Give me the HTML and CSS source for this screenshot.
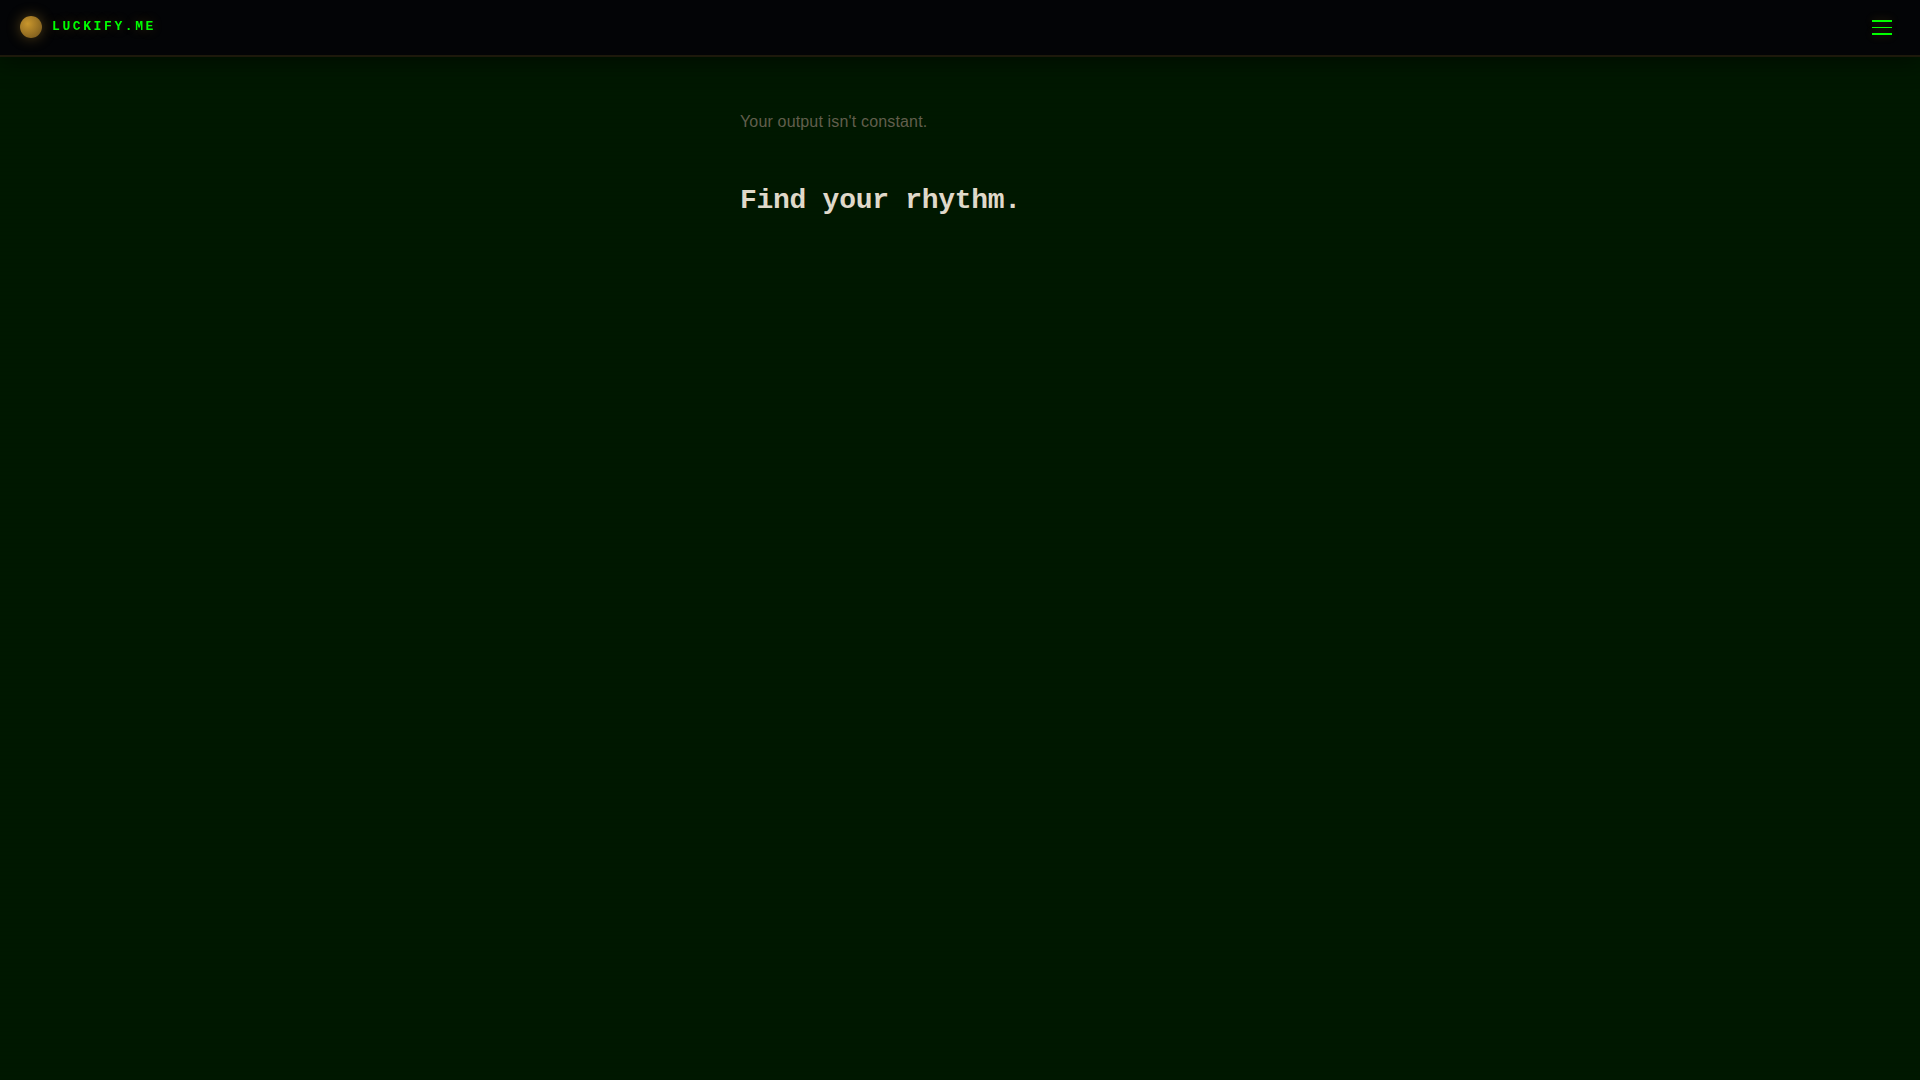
FILE: index.html
```html
<!DOCTYPE html>
<html lang="en">
<head>
    <meta charset="UTF-8">
    <meta name="viewport" content="width=device-width, initial-scale=1.0">
    <title>Luckify.me</title>
    <link rel="stylesheet" href="styles.css">
</head>
<body>
<header class="topbar">
    <a class="brand" href="/">
        <span class="brand-orb"></span>
        <span class="brand-name">LUCKIFY.ME</span>
    </a>
    <button class="menu-btn" type="button" aria-label="Open menu">
        <span class="line"></span>
        <span class="line thin"></span>
        <span class="line"></span>
    </button>
</header>

<main class="intro">
    <p class="lead">Your output isn't constant.</p>
    <h1 class="title">Find your rhythm.</h1>
</main>
</body>
</html>
```

FILE: styles.css
```css
:root {
    --bg: #001800;
    --bar: #030406;
    --green: #00ff00;
    --gold: #c9962c;
    --text: #e0dacb;
    --muted: #625f4d;
}

* {
    box-sizing: border-box;
}

body {
    margin: 0;
    min-height: 100vh;
    background: var(--bg);
    color: var(--text);
    font-family: "Liberation Sans", Arial, sans-serif;
}

/* scanlines over the page, too faint to show on the dark background */
body::after {
    content: "";
    position: fixed;
    inset: 0;
    pointer-events: none;
    background: repeating-linear-gradient(to bottom, transparent 0 3px, rgba(0, 0, 0, 0.02) 3px 4px);
}

/* Header */
.topbar {
    position: relative;
    z-index: 1;
    display: flex;
    align-items: center;
    justify-content: space-between;
    height: 57px;
    padding: 0 20px;
    background: var(--bar);
    border-bottom: 2px solid #1d190b;
    box-shadow: 0 4px 24px rgba(0, 0, 0, 0.5);
}

.brand {
    display: flex;
    align-items: center;
    gap: 10px;
    height: 23px;
    padding-bottom: 1px;
    text-decoration: none;
}

.brand-orb {
    width: 22px;
    height: 22px;
    border-radius: 50%;
    background: radial-gradient(circle at 35% 35%, var(--gold), #6e511b);
    box-shadow: 0 0 14px rgba(201, 150, 44, 0.4);
}

.brand-name {
    color: var(--green);
    font: bold 13px/20px "Liberation Mono", monospace;
    letter-spacing: 0.2em;
    text-shadow: 0 0 12px rgba(201, 150, 44, 0.3);
}

.menu-btn {
    display: flex;
    flex-direction: column;
    gap: 5px;
    padding: 8px;
    border: 0;
    background: none;
    cursor: pointer;
}

.menu-btn .line {
    width: 20px;
    height: 2px;
    background: var(--green);
    box-shadow: 0 0 8px rgba(201, 150, 44, 0.3);
}

.menu-btn .line.thin {
    height: 1px;
}

/* Intro */
.intro {
    max-width: 480px;
    margin: 0 auto;
    padding: 52px 20px;
}

.lead {
    margin: 0 0 48px;
    color: var(--muted);
    font-size: 16px;
    line-height: 26px;
    letter-spacing: 0.01em;
}

.title {
    margin: 0;
    font: bold 28px/36px "Liberation Mono", monospace;
    letter-spacing: -0.01em;
}
```
